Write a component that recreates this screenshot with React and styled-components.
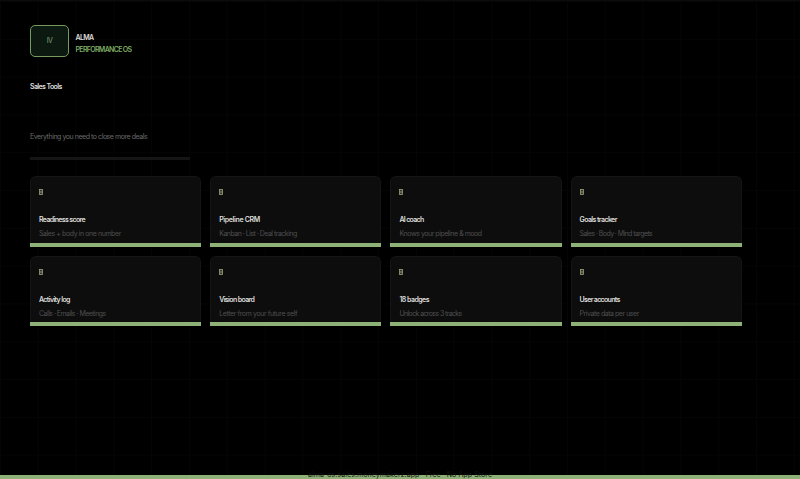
import React from 'react';
import styled, { createGlobalStyle } from 'styled-components';

const tools = [
  { title: 'Readiness score', titleTracking: -0.65, text: 'Sales + body in one number', textTracking: -0.42 },
  { title: 'Pipeline CRM', titleTracking: -0.36, text: 'Kanban · List · Deal tracking', textTracking: -0.51 },
  { title: 'AI coach', titleTracking: -0.68, text: 'Knows your pipeline & mood', textTracking: -0.46 },
  { title: 'Goals tracker', titleTracking: -0.6, text: 'Sales · Body · Mind targets', textTracking: -0.58 },
  { title: 'Activity log', titleTracking: -0.62, text: 'Calls · Emails · Meetings', textTracking: -0.53 },
  { title: 'Vision board', titleTracking: -0.62, text: 'Letter from your future self', textTracking: -0.39 },
  { title: '18 badges', titleTracking: -0.53, text: 'Unlock across 3 tracks', textTracking: -0.61 },
  { title: 'User accounts', titleTracking: -0.68, text: 'Private data per user', textTracking: -0.46 },
];

const ToolCard = ({ tool }) => (
  <Card>
    <CardBody>
      <Glyph viewBox='0 0 4 6'>
        <rect x='0.5' y='0.5' width='3' height='5' />
        <path d='M1 3h2' />
      </Glyph>
      <CardTitle $tracking={tool.titleTracking}>{tool.title}</CardTitle>
      <CardText $tracking={tool.textTracking}>{tool.text}</CardText>
    </CardBody>
    <CardBar />
  </Card>
);

const App = () => (
  <>
    <GlobalStyle />
    <Page>
      <Brand>
        <Logo>IV</Logo>
        <BrandText>
          <BrandName>ALMA</BrandName>
          <BrandTag>PERFORMANCE OS</BrandTag>
        </BrandText>
      </Brand>
      <Heading>Sales Tools</Heading>
      <Intro>Everything you need to close more deals</Intro>
      <Rule />
      <Tools>
        {tools.map((tool) => <ToolCard key={tool.title} tool={tool} />)}
      </Tools>
      <Footer>
        <FooterText>alma-os.sales.moneymakerz.app · Free · No App Store</FooterText>
      </Footer>
    </Page>
  </>
);

export default App;

const GlobalStyle = createGlobalStyle`
  * {
    box-sizing: border-box;
  }

  body {
    margin: 0;
    background: #000;
  }
`;

const Page = styled.main`
  display: flex;
  flex-direction: column;
  width: 800px;
  height: 479px;
  overflow: hidden;
  padding: 24px 0 0 30px;
  border-top: 1px solid #0c0c0c;
  background-color: #000;
  background-image:
    linear-gradient(90deg, #050505 1px, transparent 1px),
    linear-gradient(#050505 1px, transparent 1px);
  background-size: 37.8px 37.8px;
  font-family: Inter, 'Liberation Sans', sans-serif;
  font-size: 7px;
  line-height: 12px;
  white-space: nowrap;
`;

const Brand = styled.header`
  display: flex;
  gap: 6.5px;
  height: 32px;
`;

const Logo = styled.div`
  display: flex;
  align-items: center;
  justify-content: center;
  width: 39px;
  height: 32px;
  border: 1px solid #769b5f;
  border-radius: 5px;
  background: #0b1911;
  color: #879e78;
  letter-spacing: -0.6px;
`;

const BrandText = styled.div`
  display: grid;
  grid-template-rows: 12px 12px;
  align-content: start;
  padding-top: 7px;
`;

const BrandName = styled.strong`
  color: #dededc;
  font-weight: 600;
  letter-spacing: -0.7px;
`;

const BrandTag = styled.span`
  color: #7eac63;
  font-weight: 600;
  letter-spacing: -0.67px;
`;

const Heading = styled.h1`
  margin: 24px 0 0;
  color: #dededc;
  font-size: 7px;
  font-weight: 600;
  letter-spacing: -0.62px;
`;

const Intro = styled.p`
  margin: 38px 0 0;
  color: #6a6a6a;
  letter-spacing: -0.45px;
`;

const Rule = styled.div`
  flex: none;
  width: 160px;
  height: 3px;
  margin-top: 14px;
  background: #151515;
`;

const Tools = styled.section`
  display: grid;
  grid-template-columns: repeat(4, 171.2px);
  grid-template-rows: 71px 70px;
  gap: 9px;
  margin-top: 16px;
`;

const Card = styled.article`
  display: flex;
  flex-direction: column;
`;

const CardBody = styled.div`
  display: flex;
  flex: 1;
  flex-direction: column;
  min-height: 0;
  padding: 12px 8px 0;
  border: 1px solid #151515;
  border-bottom: none;
  border-radius: 6px 6px 0 0;
  background: #0d0d0d;
`;

const CardBar = styled.div`
  height: 4px;
  background: #8db176;
`;

const Glyph = styled.svg`
  flex: none;
  width: 4px;
  height: 6px;
  margin-bottom: 19px;
  fill: #343a2d;
  stroke: #98a47c;
  stroke-width: 0.8;
`;

const CardTitle = styled.h2`
  margin: 0 0 2px;
  color: #dededc;
  font-size: 7px;
  font-weight: 600;
  letter-spacing: ${({ $tracking }) => $tracking}px;
`;

const CardText = styled.p`
  margin: 0;
  color: #4f4f4f;
  letter-spacing: ${({ $tracking }) => $tracking}px;
`;

const Footer = styled.footer`
  position: relative;
  height: 4px;
  margin-top: auto;
  margin-left: -30px;
  background: #8db176;
`;

/* the caption sits across the top edge of the bar */
const FooterText = styled.span`
  position: absolute;
  bottom: -2px;
  left: 308px;
  color: #141512;
  letter-spacing: 0.08px;
`;
